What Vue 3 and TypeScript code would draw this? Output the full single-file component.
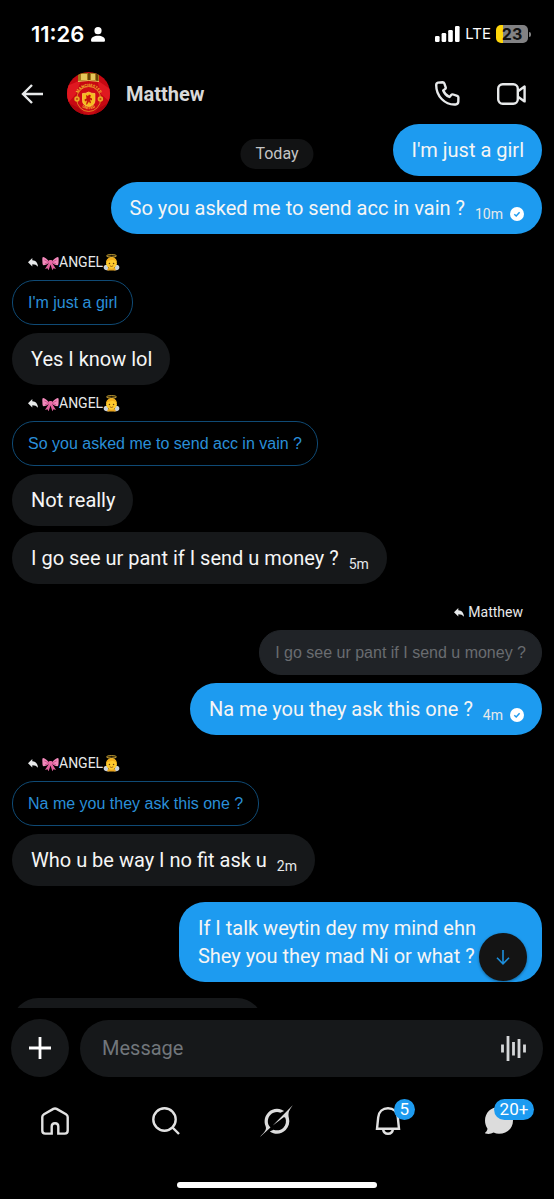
<script setup lang="ts">
import { ref } from 'vue'

type Item = {
  side: 'in' | 'out'
  lines: string[]
  time?: string
  seen?: boolean
  replyTo?: 'angel' | 'matthew'
  quote?: string
  start?: boolean
  roomy?: boolean
}

const items: Item[] = [
  { side: 'out', lines: ["I'm just a girl"] },
  { side: 'out', lines: ['So you asked me to send acc in vain ?'], time: '10m', seen: true },
  { side: 'in', start: true, replyTo: 'angel', quote: "I'm just a girl", lines: ['Yes I know lol'] },
  { side: 'in', replyTo: 'angel', quote: 'So you asked me to send acc in vain ?', lines: ['Not really'] },
  { side: 'in', lines: ['I go see ur pant if I send u money ?'], time: '5m' },
  { side: 'out', start: true, replyTo: 'matthew', quote: 'I go see ur pant if I send u money ?', lines: ['Na me you they ask this one ?'], time: '4m', seen: true },
  { side: 'in', start: true, replyTo: 'angel', quote: 'Na me you they ask this one ?', lines: ['Who u be way I no fit ask u'], time: '2m' },
  { side: 'out', start: true, roomy: true, lines: ['If I talk weytin dey my mind ehn', 'Shey you they mad Ni or what ?'] },
]

const draft = ref('')
</script>

<template>
  <div class="screen">
    <div class="status">
      <span class="clock">11:26</span>
      <svg class="person" viewBox="0 0 14 15" aria-hidden="true">
        <circle cx="7" cy="3.7" r="3.6" />
        <path d="M0 13.2C0 10.4 3 8.800 7 8.800s7 1.600 7 4.400c0 1.100-.6 1.600-1.500 1.600h-11C.6 14.800 0 14.300 0 13.200Z" />
      </svg>
      <span class="grow"></span>
      <svg class="signal" viewBox="0 0 25 16" aria-hidden="true">
        <rect x="0" y="10" width="4.6" height="6" rx="1.3" />
        <rect x="6.6" y="7" width="4.6" height="9" rx="1.3" />
        <rect x="13.2" y="4" width="4.6" height="12" rx="1.3" />
        <rect x="20" y="0" width="4.6" height="16" rx="1.3" />
      </svg>
      <span class="lte">LTE</span>
      <span class="battery"><span class="cell">23</span><span class="nub"></span></span>
    </div>

    <header class="header">
      <button class="icon-btn" aria-label="Back">
        <svg class="back" viewBox="0 0 22 20"><path d="M11 1 2 10l9 9M2 10h20" /></svg>
      </button>
      <svg class="avatar" viewBox="0 0 43 43" role="img" aria-label="Manchester United crest">
        <defs>
          <clipPath id="round"><circle cx="21.5" cy="21.5" r="21.5" /></clipPath>
          <path id="arc-top" d="M10.5 23.5A11.6 11.6 0 0 1 33.1 23.5" />
          <path id="arc-bottom" d="M10.5 31.5Q21.7 43 33 31.5" />
        </defs>
        <g clip-path="url(#round)">
          <rect width="43" height="43" fill="#c70812" />
          <path d="M0 14 14 8 9 22 0 32ZM30 8l13 9v13l-9-8Z" fill="#e01820" />
          <path d="M0 30 12 36 18 43H0ZM43 30 32 36 26 43h17Z" fill="#ad050e" />
          <path d="M11 1h21v8.5q-10.5-2-21 0Z" fill="#a97717" />
          <path d="M14 2h6v6h-6ZM24 2h4v6h-4Z" fill="#e6c75a" />
          <path d="M21 1h2v7h-2ZM29 2h2v7h-2Z" fill="#664408" />
          <path d="M11 9.5q10.5-2 21 0" stroke="#f1d56b" stroke-width=".8" fill="none" />
          <ellipse cx="21.7" cy="27" rx="12" ry="12.5" fill="#cf0b16" stroke="#e7a02b" stroke-width=".8" />
          <circle cx="10" cy="27" r="2.7" fill="#e9a624" /><circle cx="33.4" cy="27" r="2.7" fill="#e9a624" />
          <circle cx="10" cy="27" r="1.1" fill="#c64810" /><circle cx="33.4" cy="27" r="1.1" fill="#c64810" />
          <path d="M15.5 21.5q3 .3 6.2-1.5 3.2 1.8 6.2 1.500v7q0 5-6.200 6-6.200-1-6.200-6Z" fill="#f5bd20" stroke="#ffda55" stroke-width=".7" />
          <path d="m19 23 2 1 1-1.5 2 1-1 2 2 1v2l-2-1 1 3-1 1-1-2-2 3h-1l1-4-2 1-.5-2 2-1Z" fill="#c7180c" />
          <text class="crest"><textPath href="#arc-top" startOffset="50%">MANCHESTER</textPath></text>
          <text class="crest"><textPath href="#arc-bottom" startOffset="50%">UNITED</textPath></text>
        </g>
      </svg>
      <h1 class="name">Matthew</h1>
      <span class="grow"></span>
      <button class="icon-btn" aria-label="Voice call">
        <svg class="phone" viewBox="0 0 25 25"><path d="M3 1.600 7.600 1.200C8.500 1.200 9 1.600 9.300 2.400l1.300 3.700c.3.8.1 1.500-.6 2L8.200 9.500c1.100 2.900 3.300 5.200 6.300 6.500l1.700-2c.5-.6 1.200-.8 2-.5l4 1.400c.8.3 1.200.8 1.200 1.600l-.1 4.200c-.1 1.500-1 2.700-2.700 2.800C10 24.200 1.200 15.200 1.200 4.300 1.200 2.700 1.800 1.800 3 1.600Z" /></svg>
      </button>
      <button class="icon-btn" aria-label="Video call">
        <svg class="video" viewBox="0 0 29 22"><rect x="1.2" y="1.2" width="19.6" height="19.6" rx="4.5" /><path d="m21 8.200 6.600-4.600v14.800L21 13.800" /></svg>
      </button>
    </header>

    <div class="stage">
      <main class="chat">
        <article
          v-for="(m, i) in items"
          :key="i"
          class="msg"
          :class="[m.side, { start: m.start, reply: m.replyTo }]"
        >
          <div v-if="m.replyTo" class="label">
            <svg class="reply-icon" viewBox="0 0 10 9" aria-hidden="true"><path d="M4.300 0v2.200C7.800 2.500 9.700 4.600 10 8.800 8.600 6.900 7 6.200 4.300 6.200v2.200L0 4.200Z" /></svg>
            <span v-if="m.replyTo === 'angel'" class="who">
              <svg class="emoji" viewBox="0 0 18 18" role="img" aria-label="Ribbon">
                <path d="M7.500 9 3.200 15.800l2.600-.6 1.200 1.900L9 11l2 6.100 1.200-1.900 2.600.6L10.500 9Z" fill="#e0609c" />
                <path d="M8 8.500C5.500 5.500 3 3.500 1.300 3.200.2 3.200.3 5 .4 7.500.5 10 .5 12 1.800 12c1.700-.1 4.200-1.200 6.200-3.500ZM10 8.500c2.500-3 5-5 6.700-5.300 1.100 0 1 1.800.9 4.300-.1 2.500-.1 4.500-1.400 4.500-1.700-.1-4.200-1.200-6.200-3.500Z" fill="#f28abb" />
                <path d="M7.500 8.500 2.500 6.300M7.500 9l-4.300 1.200M10.500 8.500l5-2.200M10.500 9l4.300 1.200" stroke="#c94787" stroke-width=".9" />
                <rect x="7" y="6.300" width="4" height="4.600" rx="1.500" fill="#e86ba6" />
              </svg>ANGEL<svg class="emoji" viewBox="0 0 18 18" role="img" aria-label="Baby angel">
                <path d="M4.500 11.500C2 11.300.5 12.800.7 14.600c.1 1.600 1.500 2.600 3.300 2.600h2.500ZM13.500 11.500c2.500-.2 4 1.300 3.800 3.100-.1 1.600-1.500 2.600-3.300 2.600h-2.500Z" fill="#c9d3dd" />
                <path d="M4.500 17.500q0-3.500 4.500-3.500t4.500 3.500Z" fill="#eaa51d" />
                <circle cx="9" cy="9.800" r="5.700" fill="#ffcb2e" />
                <path d="M3.300 9.500C3 5.700 6 3.200 9.200 3.200s5.800 2.500 5.500 6.300c-1-2.300-2.700-3.400-5-3.200C7 6.500 4.600 7.200 3.300 9.500Z" fill="#f4b01c" />
                <ellipse cx="9" cy="2" rx="5.200" ry="1.300" fill="none" stroke="#e6b93d" stroke-width="1" />
                <circle cx="6.800" cy="10" r=".8" fill="#5a3510" /><circle cx="11.200" cy="10" r=".8" fill="#5a3510" />
                <path d="M7.200 12.500q1.800 1.400 3.600 0" fill="none" stroke="#8c4b12" stroke-width=".9" />
              </svg>
            </span>
            <span v-else>Matthew</span>
          </div>
          <blockquote v-if="m.quote" class="quote">{{ m.quote }}</blockquote>
          <div class="bubble" :class="{ roomy: m.roomy }">
            <p class="text"><span v-for="line in m.lines" :key="line" class="line">{{ line }}</span></p>
            <span v-if="m.time" class="meta">
              {{ m.time }}
              <svg v-if="m.seen" class="seen" viewBox="0 0 14 14" aria-label="Sent"><circle cx="7" cy="7" r="7" /><path d="m4.300 7.200 1.900 1.800 3.400-3.800" /></svg>
            </span>
          </div>
        </article>
        <div class="msg in start"><div class="bubble upcoming"></div></div>
      </main>
      <span class="day">Today</span>
      <button class="to-end" aria-label="Scroll to latest">
        <svg viewBox="0 0 14 15"><path d="M7 0v13.500M1 7.800l6 6 6-6" /></svg>
      </button>
    </div>

    <form class="composer" @submit.prevent>
      <button type="button" class="add" aria-label="Add attachment">
        <svg viewBox="0 0 22 22"><path d="M11 0v22M0 11h22" /></svg>
      </button>
      <div class="field">
        <input v-model="draft" type="text" placeholder="Message" aria-label="Message" />
        <button type="button" class="icon-btn" aria-label="Record voice message">
          <svg class="wave" viewBox="0 0 25 25"><path d="M1.500 8.500v8M7 0v25M12.500 6v13.500M18 3v19M23.500 8.500v8" /></svg>
        </button>
      </div>
    </form>

    <nav class="tabs">
      <a href="#home" aria-label="Home">
        <svg class="tab-icon line-icon" viewBox="0 0 28 28"><path d="M12.400 1.900 3 7.300C1.900 8 1.300 8.900 1.300 10v13.500c0 1.900 1.100 3.100 3 3.100h6.400v-7c0-2 1.300-3.400 3.300-3.400s3.300 1.400 3.300 3.400v7h6.400c1.900 0 3-1.200 3-3.100V10c0-1.100-.6-2-1.700-2.700l-9.400-5.400c-1-.6-2.200-.6-3.200 0Z" /></svg>
      </a>
      <a href="#search" aria-label="Search">
        <svg class="tab-icon line-icon" viewBox="0 0 28 28"><circle cx="12.5" cy="12.5" r="11.2" /><path d="m20.500 20.500 6.500 6.500" /></svg>
      </a>
      <a href="#grok" aria-label="Grok">
        <svg class="grok" viewBox="0 0 33 32"><path d="M12.745 20.540l10.970-8.190c.539-.4 1.307-.244 1.564.38 1.349 3.288.746 7.241-1.938 9.955-2.683 2.714-6.417 3.310-9.830 1.954l-3.728 1.745c5.347 3.697 11.840 2.782 15.898-1.324 3.219-3.255 4.216-7.692 3.284-11.693l.008.009c-1.351-5.878.332-8.227 3.782-13.031L33 0l-4.540 4.590v-.014L12.743 20.544m-2.263 1.987c-3.837-3.707-3.175-9.446.1-12.755 2.420-2.449 6.388-3.448 9.852-1.979l3.720-1.737c-.67-.49-1.530-1.017-2.515-1.387-4.455-1.854-9.789-.931-13.410 2.728-3.483 3.523-4.579 8.940-2.697 13.561 1.405 3.454-.899 5.898-3.220 8.364C1.490 30.200.666 31.074 0 31.996l10.478-9.466" /></svg>
      </a>
      <a href="#notifications" aria-label="Notifications, 5 new">
        <svg class="tab-icon line-icon" viewBox="0 0 28 28"><path d="M3 21.800 4.200 10.300C4.800 4.800 8.700 1.300 14 1.300s9.200 3.500 9.800 9L25 21.800ZM9 22c.4 3 2.200 4.700 5 4.700s4.600-1.700 5-4.700" /></svg>
        <span class="badge">5</span>
      </a>
      <a href="#messages" aria-label="Messages, more than 20 new">
        <svg class="tab-icon solid-icon" viewBox="0 0 28 28"><path d="M14 0C6 0 0 5.800 0 13.500c0 3 .9 5.700 2.400 7.900.2 1.500-.7 3-2.100 4.100-.4.400-.2 1 .3 1.100 3.200.6 5.700.2 8-1 1.800.8 3.500 1.200 5.400 1.200 8 0 14-5.700 14-13.400S22 0 14 0Z" /></svg>
        <span class="badge wide">20+</span>
      </a>
    </nav>
    <div class="home-bar"></div>
  </div>
</template>

<style>
html,
body {
  margin: 0;
  background: #000;
}
</style>

<style scoped>
.screen {
  height: 100vh;
  display: flex;
  flex-direction: column;
  background: #000;
  color: #e7e9ea;
  font-family: Roboto, sans-serif;
  font-size: 20px;
  overflow: hidden;
}
button {
  padding: 0;
  border: 0;
  background: none;
  color: inherit;
  font: inherit;
}
svg {
  display: block;
  flex: none;
}
.grow {
  flex: 1;
}

.status {
  display: flex;
  align-items: center;
  padding: 22px 23px 0 31px;
  line-height: 24px;
  color: #fff;
}
.clock {
  font-family: Inter, sans-serif;
  font-weight: 600;
  font-size: 22px;
}
.person {
  width: 14px;
  height: 15px;
  margin-left: 7px;
  fill: #fff;
}
.signal {
  width: 25px;
  height: 16px;
  fill: #fff;
}
.lte {
  margin: 0 5px;
  font-family: Inter, sans-serif;
  font-size: 15px;
}
.battery {
  display: flex;
  align-items: center;
  gap: 1px;
}
.cell {
  width: 32px;
  height: 18px;
  border-radius: 5px;
  background: linear-gradient(90deg, #ffd60a 23%, #828284 23%);
  color: #111;
  font: 700 16px/18px Inter, sans-serif;
  text-align: center;
}
.nub {
  width: 2px;
  height: 5px;
  border-radius: 0 2px 2px 0;
  background: #828284;
}

.header {
  display: flex;
  align-items: center;
  padding: 26px 28px 9px 21px;
}
.back {
  width: 22px;
  height: 20px;
  fill: none;
  stroke: #e7e9ea;
  stroke-width: 2.4;
}
.avatar {
  width: 43px;
  height: 43px;
  margin: 0 16px 0 24px;
}
.crest {
  font: 700 4px Roboto, sans-serif;
  fill: #f3b52c;
  text-anchor: middle;
}
.name {
  margin: 0;
  font-size: 20px;
  font-weight: 700;
  line-height: 28px;
  color: #d9d9d9;
}
.phone {
  width: 25px;
  height: 25px;
  margin-right: 37px;
}
.video {
  width: 29px;
  height: 22px;
}
.phone,
.video {
  fill: none;
  stroke: #e7e9ea;
  stroke-width: 2.4;
  stroke-linejoin: round;
}

.stage {
  position: relative;
  flex: 1;
  min-height: 0;
}
.chat {
  height: 100%;
  overflow: hidden;
  display: flex;
  flex-direction: column;
  padding: 0 12px;
  box-sizing: border-box;
}
.msg {
  flex: none;
  display: flex;
  flex-direction: column;
  align-items: flex-start;
  gap: 8px;
}
.msg.out {
  align-items: flex-end;
}
.msg + .msg {
  margin-top: 6px;
}
.msg + .msg.reply {
  margin-top: 8px;
}
.msg + .msg.start {
  margin-top: 16px;
}
.msg + .msg.start.reply {
  margin-top: 18px;
}
.label {
  display: flex;
  align-items: center;
  gap: 4px;
  padding: 0 19px 0 16px;
  font-size: 14px;
  line-height: 20px;
}
.who {
  display: flex;
  align-items: center;
}
.emoji {
  width: 17px;
  height: 17px;
}
.reply-icon {
  width: 10px;
  height: 9px;
  fill: #e7e9ea;
}
.quote {
  margin: 0;
  padding: 0 15px;
  border: 1px solid #0f4a75;
  border-radius: 22px;
  font-family: "Liberation Sans", sans-serif;
  font-size: 16px;
  line-height: 43px;
  color: #2a8fd8;
}
.out .quote {
  border-color: #202327;
  background: #202327;
  color: #696c70;
}
.bubble {
  display: flex;
  align-items: flex-end;
  gap: 10px;
  padding: 12px 18px 12px 19px;
  border-radius: 26px;
  background: #16181a;
  line-height: 28px;
  color: #f5f5f5;
}
.out .bubble {
  background: #1d9bf0;
}
.bubble.roomy {
  padding-right: 66px;
}
.text {
  margin: 0;
}
.line {
  display: block;
}
.meta {
  display: flex;
  align-items: center;
  gap: 7px;
  font-size: 14px;
  line-height: 16px;
  color: #e7e9ea;
}
.seen {
  width: 14px;
  height: 14px;
  fill: #fff;
}
.seen path {
  fill: none;
  stroke: #1d9bf0;
  stroke-width: 1.5;
}
.upcoming {
  width: 214px;
  height: 28px;
}
.day {
  position: absolute;
  top: 15px;
  left: 50%;
  transform: translateX(-50%);
  padding: 0 15px;
  border-radius: 15px;
  background: #121314;
  font-size: 16px;
  line-height: 30px;
  color: #c4c4c4;
}
.to-end {
  position: absolute;
  right: 27px;
  bottom: 27px;
  width: 48px;
  height: 48px;
  display: grid;
  place-items: center;
  border-radius: 50%;
  background: #141414;
  box-shadow: 0 1px 3px rgba(0, 0, 0, 0.4);
}
.to-end svg {
  width: 14px;
  height: 15px;
  fill: none;
  stroke: #1d8fdc;
  stroke-width: 1.6;
}

.composer {
  display: flex;
  align-items: center;
  gap: 11px;
  padding: 11px 11px 0;
}
.add {
  flex: none;
  width: 58px;
  height: 58px;
  display: grid;
  place-items: center;
  border-radius: 50%;
  background: #16181a;
}
.add svg {
  width: 22px;
  height: 22px;
  stroke: #fff;
  stroke-width: 2.8;
}
.field {
  flex: 1;
  min-width: 0;
  display: flex;
  align-items: center;
  padding: 0 17px 0 22px;
  border-radius: 29px;
  background: #16181a;
}
.field input {
  flex: 1;
  min-width: 0;
  height: 57px;
  padding: 0;
  border: 0;
  outline: 0;
  background: none;
  color: #e7e9ea;
  font: inherit;
}
.field input::placeholder {
  color: #71767b;
  opacity: 1;
}
.wave {
  width: 25px;
  height: 25px;
  stroke: #d4d6d8;
  stroke-width: 2.8;
}

.tabs {
  display: grid;
  grid-template-columns: repeat(5, 1fr);
  height: 87px;
}
.tabs a {
  position: relative;
  display: grid;
  place-items: center;
  color: #fff;
  text-decoration: none;
}
.tab-icon {
  width: 28px;
  height: 28px;
}
.line-icon {
  fill: none;
  stroke: #e2e2e2;
  stroke-width: 2.4;
}
.solid-icon,
.grok {
  fill: #dcdcdc;
}
.grok {
  width: 33px;
  height: 32px;
}
.badge {
  position: absolute;
  top: 22px;
  left: calc(50% + 6px);
  min-width: 21px;
  box-sizing: border-box;
  padding: 0 5px;
  border-radius: 11px;
  background: #1d9bf0;
  color: #fff;
  font-size: 17px;
  line-height: 21px;
  text-align: center;
}
.badge.wide {
  left: calc(50% - 5px);
  padding: 0 6px;
}
.home-bar {
  width: 36%;
  height: 6px;
  margin: 18px auto 11px;
  border-radius: 3px;
  background: #fff;
}
</style>
